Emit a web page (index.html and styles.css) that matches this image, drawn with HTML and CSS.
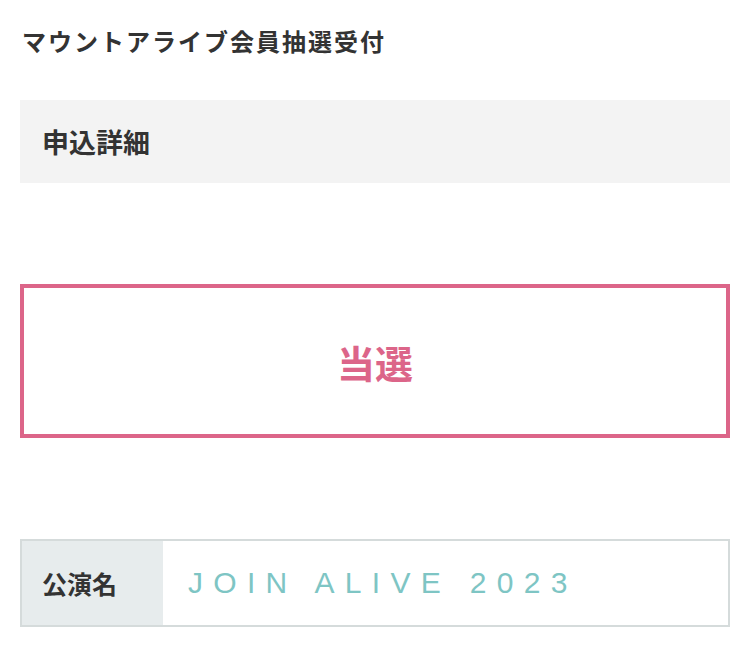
FILE: index.html
```html
<!DOCTYPE html>
<html lang="ja">
<head>
<meta charset="utf-8">
<title>マウントアライブ会員抽選受付</title>
<link rel="stylesheet" href="styles.css">
</head>
<body>
<main class="page">
  <h1 class="site-title">マウントアライブ会員抽選受付</h1>
  <h2 class="section-head">申込詳細</h2>
  <div class="result-box">当選</div>
  <div class="info-table">
    <div class="info-label">公演名</div>
    <div class="info-value">JOIN ALIVE 2023</div>
  </div>
</main>
</body>
</html>
```
FILE: styles.css
```css
* { box-sizing: border-box; }
html, body { margin: 0; padding: 0; background: #fff; }
body {
  font-family: "Noto Sans CJK JP", "Noto Sans", sans-serif;
  color: #333;
}
.page {
  padding: 0 20px;
  display: flex;
  flex-direction: column;
}
.site-title {
  margin: 26px 0 0 2px;
  font-size: 24px;
  line-height: 30px;
  font-weight: 700;
  letter-spacing: 2px;
}
.section-head {
  margin: 44px 0 0;
  height: 83px;
  display: flex;
  align-items: center;
  padding: 0 22px;
  background: #f3f3f3;
  font-size: 27px;
  font-weight: 700;
}
.result-box {
  margin-top: 101px;
  height: 154px;
  border: 4px solid #dc6589;
  display: flex;
  align-items: center;
  justify-content: center;
  color: #dc6589;
  font-size: 38px;
  font-weight: 700;
}
.info-table {
  margin-top: 101px;
  height: 88px;
  border: 2px solid #d5dbdb;
  display: flex;
}
.info-label {
  width: 141px;
  background: #e7eced;
  display: flex;
  align-items: center;
  padding-left: 20px;
  font-size: 25px;
  font-weight: 700;
}
.info-value {
  flex: 1;
  display: flex;
  align-items: center;
  padding-left: 25px;
  font-family: "Liberation Sans", Arial, sans-serif;
  font-size: 30px;
  letter-spacing: 10.3px;
  color: #7ec5c4;
}
```
